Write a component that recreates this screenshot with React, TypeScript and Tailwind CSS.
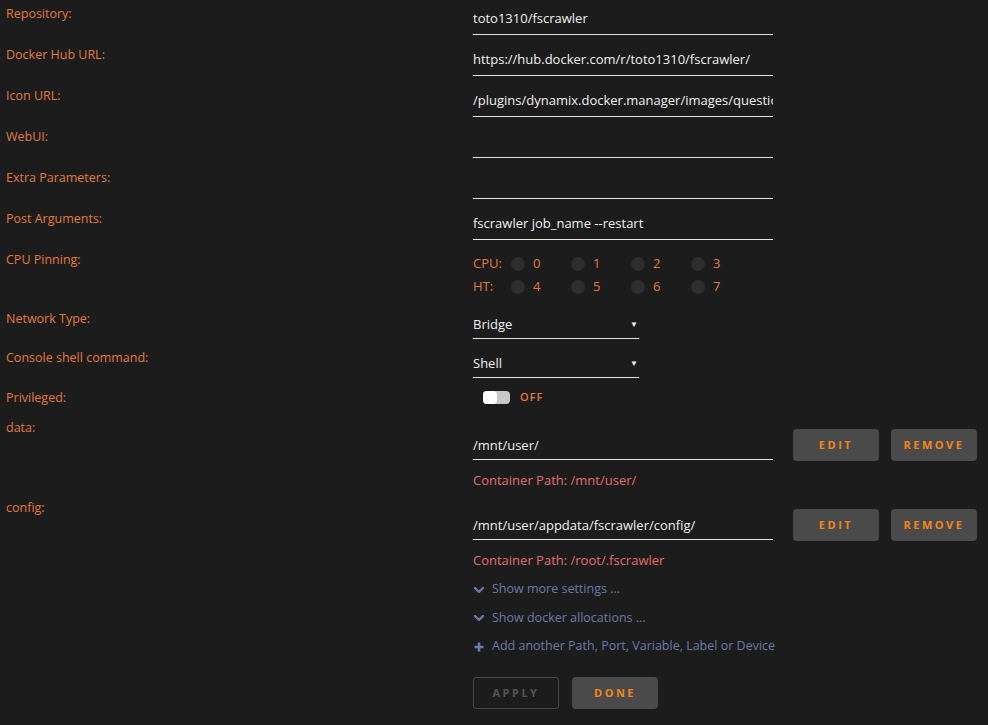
import React from "react";

const font = { fontFamily: '"Open Sans", "Noto Sans", sans-serif' };

function Label({ children }: { children: React.ReactNode }) {
  return (
    <div className="w-[473px] shrink-0 pl-[6px] pt-[6px] text-[12.5px] leading-[16px] text-[#e2793b]">
      {children}
    </div>
  );
}

function TextInput({ value }: { value: string }) {
  return (
    <div className="w-[300px] h-[35px] pt-[10px] border-b border-[#e4e4e4] text-[13px] leading-[16px] text-[#f0f0f0] whitespace-nowrap overflow-hidden">
      {value}
    </div>
  );
}

function Row({ label, value }: { label: string; value: string }) {
  return (
    <div className="flex h-[41px]">
      <Label>{label}</Label>
      <TextInput value={value} />
    </div>
  );
}

function Select({ value }: { value: string }) {
  return (
    <div className="w-[166px] h-[34px] pt-[11px] border-b border-[#e4e4e4] flex justify-between text-[13px] leading-[16px] text-[#f0f0f0]">
      <span>{value}</span>
      <span className="text-[8px] pr-[1px] leading-[16px]">▼</span>
    </div>
  );
}

function Btn({ children, className = "" }: { children: React.ReactNode; className?: string }) {
  return (
    <div
      className={
        "h-[32px] w-[86px] rounded-[4px] bg-[#4a4a4a] flex items-center justify-center text-[11px] font-bold tracking-[2.5px] text-[#f2861b] " +
        className
      }
    >
      {children}
    </div>
  );
}

function Cpu({ label, nums }: { label: string; nums: number[] }) {
  return (
    <div className="flex items-center h-[23px] text-[13px] text-[#e2793b]">
      <span className="w-[38px]">{label}</span>
      {nums.map((n) => (
        <div key={n} className="flex items-center w-[60px]">
          <div className="w-[14px] h-[14px] rounded-full bg-[#2e2e2e]" />
          <span className="ml-[8px]">{n}</span>
        </div>
      ))}
    </div>
  );
}

function PathRow({ label, host, container }: { label: string; host: string; container: string }) {
  return (
    <div className="flex h-[80px]">
      <Label>{label}</Label>
      <div className="flex flex-col">
        <div className="flex items-start">
          <div className="w-[300px] h-[46px] pt-[23px] border-b border-[#e4e4e4] text-[13px] leading-[16px] text-[#f0f0f0]">
            {host}
          </div>
          <div className="flex gap-[12px] ml-[20px] mt-[15px]">
            <Btn>EDIT</Btn>
            <Btn>REMOVE</Btn>
          </div>
        </div>
        <div className="pt-[11px] text-[13px] leading-[16px] text-[#e46c6c]">Container Path: {container}</div>
      </div>
    </div>
  );
}

function Chevron() {
  return (
    <svg width="12" height="12" viewBox="0 0 12 12" className="mr-[7px]">
      <path d="M2 4 L6 8 L10 4" stroke="#6a7aa6" strokeWidth="2.4" fill="none" strokeLinecap="round" strokeLinejoin="round" />
    </svg>
  );
}

function Plus() {
  return (
    <svg width="12" height="12" viewBox="0 0 12 12" className="mr-[7px]">
      <path d="M6 1.5 V10.5 M1.5 6 H10.5" stroke="#6a7aa6" strokeWidth="2.6" fill="none" />
    </svg>
  );
}

export default function App() {
  return (
    <div className="w-[988px] h-[725px] bg-[#1c1c1c] overflow-hidden" style={font}>
      <Row label="Repository:" value="toto1310/fscrawler" />
      <Row label="Docker Hub URL:" value="https://hub.docker.com/r/toto1310/fscrawler/" />
      <Row label="Icon URL:" value="/plugins/dynamix.docker.manager/images/question.png" />
      <Row label="WebUI:" value="" />
      <Row label="Extra Parameters:" value="" />
      <Row label="Post Arguments:" value="fscrawler job_name --restart" />
      <div className="flex h-[59px]">
        <Label>CPU Pinning:</Label>
        <div className="pt-[6px]">
          <Cpu label="CPU:" nums={[0, 1, 2, 3]} />
          <Cpu label="HT:" nums={[4, 5, 6, 7]} />
        </div>
      </div>
      <div className="flex h-[39px]">
        <Label>Network Type:</Label>
        <Select value="Bridge" />
      </div>
      <div className="flex h-[40px]">
        <Label>Console shell command:</Label>
        <Select value="Shell" />
      </div>
      <div className="flex h-[30px]">
        <Label>Privileged:</Label>
        <div className="flex items-center h-[26px] pl-[10px]">
          <div className="w-[27px] h-[13px] rounded-[4px] bg-[#c8c8c8] relative">
            <div className="absolute left-0 top-0 w-[14px] h-[13px] rounded-[4px] bg-white" />
          </div>
          <span className="ml-[10px] text-[11px] font-semibold tracking-[1px] text-[#e2793b]">OFF</span>
        </div>
      </div>
      <PathRow label="data:" host="/mnt/user/" container="/mnt/user/" />
      <PathRow label="config:" host="/mnt/user/appdata/fscrawler/config/" container="/root/.fscrawler" />
      <div className="pl-[473px] text-[12.5px] text-[#6a7aa6]">
        <div className="flex items-center h-[29px] pt-[2px]">
          <Chevron />
          Show more settings ...
        </div>
        <div className="flex items-center h-[29px] pt-[1px]">
          <Chevron />
          Show docker allocations ...
        </div>
        <div className="flex items-center h-[29px]">
          <Plus />
          Add another Path, Port, Variable, Label or Device
        </div>
        <div className="flex gap-[13px] mt-[16px]">
          <div className="h-[32px] w-[86px] rounded-[3px] border border-[#474747] flex items-center justify-center text-[11px] font-bold tracking-[2.5px] text-[#555555]">
            APPLY
          </div>
          <Btn>DONE</Btn>
        </div>
      </div>
    </div>
  );
}
